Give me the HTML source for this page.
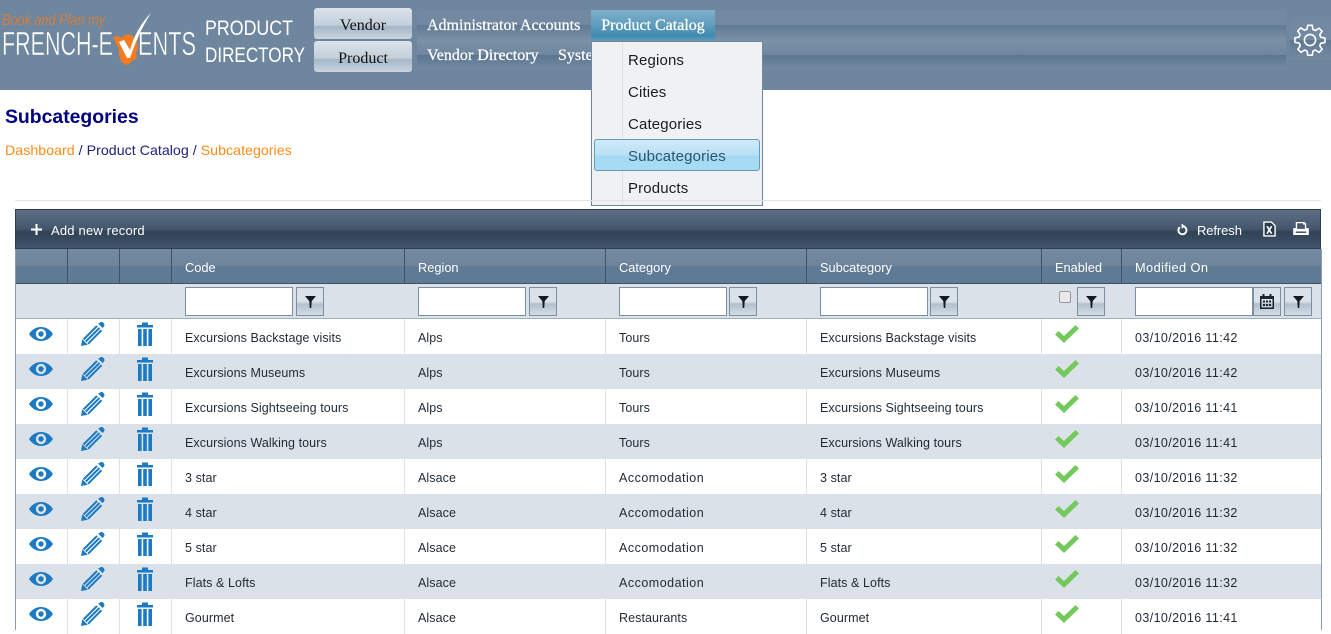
<!DOCTYPE html>
<html><head><meta charset="utf-8">
<style>
html,body{margin:0;padding:0;background:#fff;width:1331px;height:630px;overflow:hidden;font-family:"Liberation Sans",sans-serif}
.a{position:absolute}
#hdr{left:0;top:0;width:1331px;height:90px;background:#6f879e}
#band{left:417px;top:10px;width:869px;height:60px;background:linear-gradient(#7389a1 0,#7389a1 15px,#5f7992 15px,#7a91a7 30px,#6f879e 45px,#5b7590 45px,#738aa1 60px)}
#gbox{left:1290px;top:20px;width:41px;height:40px;background:linear-gradient(#7389a1 0,#7389a1 20px,#5f7992 20px,#738aa1 40px)}
.top{font-family:"Liberation Serif",serif;color:#fff;font-size:16px;white-space:nowrap;-webkit-text-stroke:.25px #fff}
.btn{left:314px;width:98px;height:31px;border-radius:3px;background:linear-gradient(#dbe3eb 0,#c3cfda 55%,#a6b8c8 60%,#c9d4de 100%);font-family:"Liberation Serif",serif;font-size:16px;color:#111;text-align:center;line-height:35px}
#menu{left:591px;top:41px;width:170px;height:163px;background:#f0f1f3;border:1px solid #6d87a0}
.mi{position:absolute;left:36px;font-size:15px;letter-spacing:.15px;color:#1a1a2a;font-family:"Liberation Sans",sans-serif}
#tb{left:15px;top:209px;width:1306px;height:40px;box-sizing:border-box;border:1px solid #2c3d50;background:linear-gradient(#5d7085 0,#43566b 50%,#2f4256 58%,#435568 100%)}
.t{font-size:13px;color:#fff;position:absolute;white-space:nowrap;letter-spacing:.2px}
#th{left:16px;top:249px;width:1305px;height:35px;background:linear-gradient(#748ba2 0,#6d849b 50%,#5f7a95 52%,#5f7a95 100%);border-bottom:1px solid #3d536a;box-sizing:border-box}
.h{position:absolute;top:11px;font-size:12.800px;color:#fff;white-space:nowrap}
.v{position:absolute;top:0;width:1px;height:34px;background:#3d536a}
#fl{left:16px;top:284px;width:1305px;height:35px;background:#dae1e8;border-bottom:1px solid #9fb0c0;box-sizing:border-box}
.in{position:absolute;top:3px;height:29px;box-sizing:border-box;background:#fff;border:1px solid #7b8fa3}
.fb{position:absolute;top:3px;width:28px;height:29px;box-sizing:border-box;border:1px solid #7b8fa3;background:linear-gradient(#dae1e8 0,#dae1e8 50%,#b3c2cf 60%,#d4dce4 100%)}
.fb svg{position:absolute;left:8px;top:8px}
#tbl{left:16px;top:319px;width:1305px;border-collapse:separate;border-spacing:0;table-layout:fixed;font-size:12.500px;letter-spacing:.08px;color:#1f2a33}
#tbl td{height:35px;padding:2px 0 0 13px;box-sizing:border-box;border-right:1px solid #dae1e8;white-space:nowrap;overflow:hidden;vertical-align:middle}
#tbl tr:nth-child(even) td{background:#dae1e8;border-right-color:#dae1e8}
#tbl td:last-child{border-right:0;letter-spacing:.4px}
#tbl td.ac{letter-spacing:.5px}
#tbl td.i{padding:0;position:relative}
#tbl td.i svg{position:absolute}
#edge{left:15px;top:249px;width:1px;height:381px;background:#8a9fb3}
#edge2{left:1321px;top:249px;width:1px;height:381px;background:#8a9fb3}
</style></head>
<body>
<svg width="0" height="0" style="position:absolute"><defs>
<symbol id="eye" viewBox="0 0 24 14"><path fill="#1c7ac4" fill-rule="evenodd" d="M0 7C3 2.500 7 0 12 0s9 2.500 12 7c-3 4.500-7 7-12 7S3 11.500 0 7zM12 1.800a5.200 5.200 0 1 0 0 10.400a5.200 5.200 0 0 0 0-10.400z"/><circle cx="12" cy="7" r="2.700" fill="#1c7ac4"/></symbol>
<symbol id="pen" viewBox="0 0 24 24"><path fill="#1c7ac4" d="M0 24l1.300-6.800 5.500 5.500zM18.500 1c1.300-1.300 3-1.200 4 0 1.300 1.200 1.300 2.800 0 4l-1 1-4.500-4.500z"/><path stroke="#1c7ac4" stroke-width="2" fill="none" d="M2.500 17.500L16 4M4.800 19.500L18.500 6M7 21.800L20.500 8.200"/></symbol>
<symbol id="tr" viewBox="0 0 16 24"><path fill="#1c7ac4" d="M0 3h5V.5h6V3h5v2.500H0zM1 7h3.600v17H1zM6.200 7h3.600v17H6.200zM11.400 7H15v17h-3.600z"/></symbol>
<symbol id="ck" viewBox="0 0 24 18"><path fill="#74c95c" d="M0 9.500L3.500 6l5.500 5L20.500 0 24 3.500 9 18z"/></symbol>
<symbol id="fn" viewBox="0 0 12 13"><path fill="#111a22" d="M0 0h12L7.300 5.500 6.800 13H5.200l-.5-7.500z"/></symbol>
</defs></svg>

<div id="hdr" class="a"></div>
<div id="band" class="a"></div>
<div id="gbox" class="a"></div>

<svg class="a" style="left:0;top:8px" width="200" height="60" viewBox="0 8 200 60">
<path fill="#f47b20" d="M113 37l5-1 4 2 3-3 4-1 5 3 4 0-1 6 1 5-2 5 1 5-5 3-4 4-4-1-3-3-2-6 0-6-3-6z"/>
<text x="2" y="25" font-family="Liberation Sans" font-style="italic" font-size="16" fill="#f47b20" stroke="#6f879e" stroke-width=".3" textLength="103" lengthAdjust="spacingAndGlyphs">Book and Plan my</text>
<text x="2" y="55" font-family="Liberation Sans" font-size="33" fill="#fff" stroke="#6f879e" stroke-width=".5" textLength="111" lengthAdjust="spacingAndGlyphs">FRENCH-E</text>
<text x="138" y="55" font-family="Liberation Sans" font-size="33" fill="#fff" stroke="#6f879e" stroke-width=".5" textLength="58" lengthAdjust="spacingAndGlyphs">ENTS</text>
<path fill="#fff" d="M119 42l5-2 6 10C134 35 142 22 151 13c-9 14-16 30-21 45h-3z"/>
</svg>

<svg class="a" style="left:200px;top:12px" width="115" height="56" font-family="Liberation Sans" font-size="21" fill="#fff"><text x="5" y="23" textLength="88" lengthAdjust="spacingAndGlyphs">PRODUCT</text><text x="5" y="50" textLength="100" lengthAdjust="spacingAndGlyphs">DIRECTORY</text></svg>

<div class="a btn" style="top:8px">Vendor</div>
<div class="a btn" style="top:41px">Product</div>

<div class="a top" style="left:427px;top:17px">Administrator Accounts</div>
<div class="a top" style="left:427px;top:47px">Vendor Directory</div>
<div class="a top" style="left:558px;top:47px">System</div>
<div class="a top" style="left:591px;top:10px;width:124px;height:30px;line-height:32px;text-align:center;background:linear-gradient(#7eb0ca 0,#5f9dbd 50%,#3f8bb0 85%,#579abb 100%)">Product Catalog</div>

<div id="menu" class="a">
<div class="a" style="left:30px;top:0;width:1px;height:163px;background:#dde0e4"></div>
<div class="a" style="left:2px;top:97px;width:164px;height:30px;border:1px solid #5f9dbd;border-radius:3px;background:linear-gradient(#cfeaf8 0,#b8e0f5 50%,#a3daf3 55%,#a8dcf3 100%)"></div>
<div class="mi" style="top:10px">Regions</div>
<div class="mi" style="top:42px">Cities</div>
<div class="mi" style="top:74px">Categories</div>
<div class="mi" style="top:106px;color:#2d5470">Subcategories</div>
<div class="mi" style="top:138px">Products</div>
</div>

<svg class="a" style="left:1294px;top:24px" width="32" height="32" viewBox="0 0 24 24" fill="none" stroke="#fff" stroke-width="1.200" stroke-linejoin="round"><circle cx="12" cy="12" r="4.200"/><path d="M10.300 1h3.400l.5 3.100 1.900.8 2.600-1.800 2.400 2.400-1.800 2.600.8 1.900 3.100.5v3.400l-3.100.5-.8 1.900 1.800 2.600-2.400 2.400-2.600-1.800-1.900.8-.5 3.100h-3.400l-.5-3.100-1.900-.8-2.600 1.800-2.400-2.400 1.800-2.600-.8-1.900L.7 13.700v-3.400l3.100-.5.8-1.900-1.800-2.600 2.400-2.400 2.600 1.800 1.900-.8z"/></svg>

<div class="a" style="left:5px;top:106px;font-size:19.400px;line-height:23px;font-weight:bold;color:#000080;white-space:nowrap">Subcategories</div>
<div class="a" style="left:5px;top:143px;font-size:14.250px;white-space:nowrap;color:#222277"><span style="color:#ff8c1a">Dashboard</span> / Product Catalog / <span style="color:#ff8c1a">Subcategories</span></div>
<div class="a" style="left:15px;top:200px;width:1306px;height:1px;background:#e2e2e2"></div>

<div id="tb" class="a">
<svg class="a" style="left:15px;top:14px" width="11" height="11" viewBox="0 0 11 11"><path fill="#fff" d="M4.500 0h2v4.500H11v2H6.500V11h-2V6.500H0v-2h4.500z"/></svg>
<div class="t" style="left:35px;top:13px">Add new record</div>
<svg class="a" style="left:1161px;top:13px" width="11" height="13" viewBox="0 0 12 13" fill="none"><path stroke="#fff" stroke-width="2" d="M7.500 3.200A4.400 4.400 0 1 1 3 4"/><path fill="#fff" d="M5 0l4 3-4 2.500z"/></svg>
<div class="t" style="left:1181px;top:13px;letter-spacing:-.1px">Refresh</div>
<svg class="a" style="left:1247px;top:11px" width="13" height="16" viewBox="0 0 14 17"><path fill="#26394c" stroke="#fff" stroke-width="1.500" d="M1 1h8l4 4v11H1z"/><path stroke="#fff" stroke-width="1.800" d="M4.300 5.500l5 8M9.300 5.500l-5 8"/></svg>
<svg class="a" style="left:1277px;top:12px" width="16" height="13" viewBox="0 0 18 15"><path fill="#fff" d="M3 0h10l2 2v5h3v8H0V7h3zM4.500 1.500V8h9V3h-2V1.500zM3 11v1.500h12V11z"/></svg>
</div>

<div id="th" class="a">
<div class="v" style="left:51px"></div><div class="v" style="left:103px"></div><div class="v" style="left:155px"></div><div class="v" style="left:388px"></div><div class="v" style="left:589px"></div><div class="v" style="left:790px"></div><div class="v" style="left:1025px"></div><div class="v" style="left:1105px"></div>
<div class="h" style="left:169px">Code</div>
<div class="h" style="left:402px">Region</div>
<div class="h" style="left:603px">Category</div>
<div class="h" style="left:804px">Subcategory</div>
<div class="h" style="left:1039px">Enabled</div>
<div class="h" style="left:1119px;letter-spacing:.4px">Modified On</div>
</div>

<div id="fl" class="a">
<div class="in" style="left:169px;width:108px"></div><div class="fb" style="left:280px"><svg width="11" height="12"><use href="#fn"/></svg></div>
<div class="in" style="left:402px;width:108px"></div><div class="fb" style="left:513px"><svg width="11" height="12"><use href="#fn"/></svg></div>
<div class="in" style="left:603px;width:108px"></div><div class="fb" style="left:713px"><svg width="11" height="12"><use href="#fn"/></svg></div>
<div class="in" style="left:804px;width:108px"></div><div class="fb" style="left:914px"><svg width="11" height="12"><use href="#fn"/></svg></div>
<div class="a" style="left:1043px;top:7px;width:12px;height:12px;box-sizing:border-box;border:1px solid #9a9a9a;border-radius:2px;background:#e9e9e9"></div>
<div class="fb" style="left:1061px"><svg width="11" height="12"><use href="#fn"/></svg></div>
<div class="in" style="left:1119px;width:118px"></div>
<div class="fb" style="left:1237px"><svg style="left:6px;top:6px" width="14" height="15" viewBox="0 0 14 15"><path fill="#1a2530" d="M0 2h2.500V0h2v2h5V0h2v2H14v13H0zM1.500 5v8.500h11V5zM3 6.500h2v2H3zM6 6.500h2v2H6zM9 6.500h2v2H9zM3 10h2v2H3zM6 10h2v2H6zM9 10h2v2H9z"/></svg></div>
<div class="fb" style="left:1268px"><svg width="11" height="12"><use href="#fn"/></svg></div>
</div>

<table id="tbl" class="a">
<colgroup><col style="width:52px"><col style="width:52px"><col style="width:52px"><col style="width:233px"><col style="width:201px"><col style="width:201px"><col style="width:235px"><col style="width:80px"><col></colgroup>
<tr><td class="i"><svg style="left:13px;top:8px" width="24" height="14"><use href="#eye"/></svg></td><td class="i"><svg style="left:13px;top:3px" width="24" height="24"><use href="#pen"/></svg></td><td class="i"><svg style="left:17px;top:3px" width="16" height="24"><use href="#tr"/></svg></td><td>Excursions Backstage visits</td><td>Alps</td><td>Tours</td><td>Excursions Backstage visits</td><td class="i"><svg style="left:13px;top:6px" width="24" height="18"><use href="#ck"/></svg></td><td>03/10/2016 11:42</td></tr>
<tr><td class="i"><svg style="left:13px;top:8px" width="24" height="14"><use href="#eye"/></svg></td><td class="i"><svg style="left:13px;top:3px" width="24" height="24"><use href="#pen"/></svg></td><td class="i"><svg style="left:17px;top:3px" width="16" height="24"><use href="#tr"/></svg></td><td>Excursions Museums</td><td>Alps</td><td>Tours</td><td>Excursions Museums</td><td class="i"><svg style="left:13px;top:6px" width="24" height="18"><use href="#ck"/></svg></td><td>03/10/2016 11:42</td></tr>
<tr><td class="i"><svg style="left:13px;top:8px" width="24" height="14"><use href="#eye"/></svg></td><td class="i"><svg style="left:13px;top:3px" width="24" height="24"><use href="#pen"/></svg></td><td class="i"><svg style="left:17px;top:3px" width="16" height="24"><use href="#tr"/></svg></td><td>Excursions Sightseeing tours</td><td>Alps</td><td>Tours</td><td>Excursions Sightseeing tours</td><td class="i"><svg style="left:13px;top:6px" width="24" height="18"><use href="#ck"/></svg></td><td>03/10/2016 11:41</td></tr>
<tr><td class="i"><svg style="left:13px;top:8px" width="24" height="14"><use href="#eye"/></svg></td><td class="i"><svg style="left:13px;top:3px" width="24" height="24"><use href="#pen"/></svg></td><td class="i"><svg style="left:17px;top:3px" width="16" height="24"><use href="#tr"/></svg></td><td>Excursions Walking tours</td><td>Alps</td><td>Tours</td><td>Excursions Walking tours</td><td class="i"><svg style="left:13px;top:6px" width="24" height="18"><use href="#ck"/></svg></td><td>03/10/2016 11:41</td></tr>
<tr><td class="i"><svg style="left:13px;top:8px" width="24" height="14"><use href="#eye"/></svg></td><td class="i"><svg style="left:13px;top:3px" width="24" height="24"><use href="#pen"/></svg></td><td class="i"><svg style="left:17px;top:3px" width="16" height="24"><use href="#tr"/></svg></td><td>3 star</td><td>Alsace</td><td class="ac">Accomodation</td><td>3 star</td><td class="i"><svg style="left:13px;top:6px" width="24" height="18"><use href="#ck"/></svg></td><td>03/10/2016 11:32</td></tr>
<tr><td class="i"><svg style="left:13px;top:8px" width="24" height="14"><use href="#eye"/></svg></td><td class="i"><svg style="left:13px;top:3px" width="24" height="24"><use href="#pen"/></svg></td><td class="i"><svg style="left:17px;top:3px" width="16" height="24"><use href="#tr"/></svg></td><td>4 star</td><td>Alsace</td><td class="ac">Accomodation</td><td>4 star</td><td class="i"><svg style="left:13px;top:6px" width="24" height="18"><use href="#ck"/></svg></td><td>03/10/2016 11:32</td></tr>
<tr><td class="i"><svg style="left:13px;top:8px" width="24" height="14"><use href="#eye"/></svg></td><td class="i"><svg style="left:13px;top:3px" width="24" height="24"><use href="#pen"/></svg></td><td class="i"><svg style="left:17px;top:3px" width="16" height="24"><use href="#tr"/></svg></td><td>5 star</td><td>Alsace</td><td class="ac">Accomodation</td><td>5 star</td><td class="i"><svg style="left:13px;top:6px" width="24" height="18"><use href="#ck"/></svg></td><td>03/10/2016 11:32</td></tr>
<tr><td class="i"><svg style="left:13px;top:8px" width="24" height="14"><use href="#eye"/></svg></td><td class="i"><svg style="left:13px;top:3px" width="24" height="24"><use href="#pen"/></svg></td><td class="i"><svg style="left:17px;top:3px" width="16" height="24"><use href="#tr"/></svg></td><td>Flats &amp; Lofts</td><td>Alsace</td><td class="ac">Accomodation</td><td>Flats &amp; Lofts</td><td class="i"><svg style="left:13px;top:6px" width="24" height="18"><use href="#ck"/></svg></td><td>03/10/2016 11:32</td></tr>
<tr><td class="i"><svg style="left:13px;top:8px" width="24" height="14"><use href="#eye"/></svg></td><td class="i"><svg style="left:13px;top:3px" width="24" height="24"><use href="#pen"/></svg></td><td class="i"><svg style="left:17px;top:3px" width="16" height="24"><use href="#tr"/></svg></td><td>Gourmet</td><td>Alsace</td><td>Restaurants</td><td>Gourmet</td><td class="i"><svg style="left:13px;top:6px" width="24" height="18"><use href="#ck"/></svg></td><td>03/10/2016 11:41</td></tr>
</table>
<div id="edge" class="a"></div><div id="edge2" class="a"></div>
</body></html>
